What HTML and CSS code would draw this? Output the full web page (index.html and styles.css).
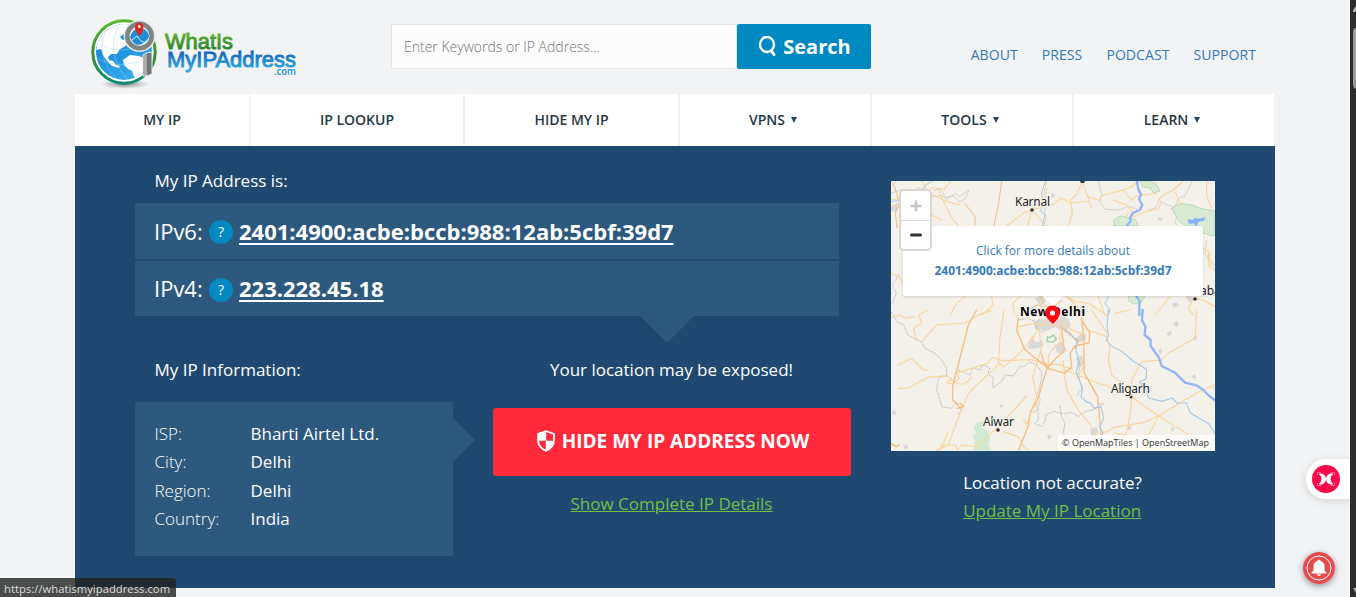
FILE: index.html
```html
<!DOCTYPE html>
<html lang="en">
<head>
<meta charset="utf-8">
<title>What Is My IP Address</title>
<link rel="stylesheet" href="styles.css">
</head>
<body>
<div class="page">
  <header class="header">
    <a class="logo">
      <svg width="210" height="76" viewBox="0 0 210 76">
        <defs>
          <linearGradient id="ring" x1="0" y1="0" x2="0" y2="1"><stop offset="0" stop-color="#5cb531"/><stop offset=".55" stop-color="#35912f"/><stop offset="1" stop-color="#0d8a72"/></linearGradient>
          <linearGradient id="sea" x1="0" y1="0" x2=".5" y2="1"><stop offset="0" stop-color="#0876cf"/><stop offset="1" stop-color="#35a9ea"/></linearGradient>
          <linearGradient id="wg" x1="0" y1="0" x2="0" y2="1"><stop offset=".2" stop-color="#5cb02e"/><stop offset=".8" stop-color="#2c842f"/></linearGradient>
          <linearGradient id="wb" x1="0" y1="0" x2="0" y2="1"><stop offset=".2" stop-color="#1261b8"/><stop offset=".85" stop-color="#29a4e2"/></linearGradient>
          <radialGradient id="sh"><stop offset="0" stop-color="#777"/><stop offset="1" stop-color="#aaa" stop-opacity="0"/></radialGradient>
          <clipPath id="globe"><circle cx="34" cy="36" r="28"/></clipPath>
        </defs>
        <ellipse cx="35" cy="68" rx="25" ry="5" fill="url(#sh)"/>
        <circle cx="34" cy="36" r="31.2" fill="#fff" stroke="url(#ring)" stroke-width="3"/>
        <circle cx="34" cy="36" r="28" fill="url(#sea)"/>
        <g clip-path="url(#globe)">
          <path d="M6 34l2-12 6-8 10-6 9-3 9 1-2 5-4 2-2 5-4 3 3 3 3 0 2 4-4 3-4 2-3 5-6 0-3 3 1 3 4 1 3 4 4 1-1 2-7-2-5-5-4-6-2-6zM38 27l4-3 3 3 5 3-3 3-5-1-5-1zM33 44l7-5 9 1 7 3 6 3-1 8-6 5-5 8-4-1-4-11-4-2-4-4z" fill="#fff"/>
          <path d="M7 42q26 15 56-4M8 28q24 12 50 0M15 15q-9 28 11 47M30 8q-17 27 8 56" fill="none" stroke="#9ed7f8" stroke-width=".6" opacity=".7"/>
        </g>
        <path d="M53 39q4-3 9-3v22q-3 2-9 2z" fill="#73777a" stroke="#eee" stroke-width="1"/>
        <path d="M54 39l3-1v21h-3z" fill="#a9adae"/>
        <circle cx="49.500" cy="20" r="13" fill="#dce8ee" stroke="#e8e8e8" stroke-width="6"/>
        <circle cx="49.500" cy="20" r="12.200" fill="#e5f1f7" stroke="#7e8386" stroke-width="4.500"/>
        <path d="M40 21q3-9 10-9 9 2 9 9-4 7-11 8-5-1-8-8z" fill="#218dd7"/>
        <path d="M42 24l5-4 4 5 5 2" fill="none" stroke="#d3edfa"/>
        <path d="M49.500 20q-4.500-5-4.500-9a4.200 4.200 0 018.400 0q0 4-3.900 9z" fill="#dd261c"/><circle cx="49.300" cy="10.500" r="1.400" fill="#fff"/>
        <g font-family="Liberation Sans, Arial, sans-serif" stroke-width=".9">
          <text x="75" y="33" font-size="22" textLength="68" lengthAdjust="spacingAndGlyphs" fill="url(#wg)" stroke="url(#wg)">WhatIs</text>
          <text x="77" y="50.500" font-size="22" textLength="129" lengthAdjust="spacingAndGlyphs" fill="url(#wb)" stroke="url(#wb)">MyIPAddress</text>
        </g>
        <text x="184" y="59" font-family="Open Sans, sans-serif" font-size="10" font-weight="600" textLength="22" lengthAdjust="spacingAndGlyphs" fill="#1a91d2">.com</text>
      </svg>
    </a>
    <div class="search">
      <div class="search-input">Enter Keywords or IP Address...</div>
      <div class="search-button">
        <svg width="19" height="21" viewBox="0 0 19 21"><ellipse cx="9" cy="8.500" rx="7" ry="7.500" fill="none" stroke="#fff" stroke-width="2.400"/><path d="M13.500 15l2.500 3.500" stroke="#fff" stroke-width="3" stroke-linecap="round"/></svg>
        <span>Search</span>
      </div>
    </div>
    <nav class="top-links"><a>ABOUT</a><a>PRESS</a><a>PODCAST</a><a>SUPPORT</a></nav>
  </header>

  <nav class="menu">
    <a>MY IP</a><a>IP LOOKUP</a><a>HIDE MY IP</a>
    <a class="drop">VPNS<i class="caret"></i></a><a class="drop">TOOLS<i class="caret"></i></a><a class="drop">LEARN<i class="caret"></i></a>
  </nav>

  <main class="panel">
    <section class="details">
      <h2 class="label">My IP Address is:</h2>
      <div class="ip-list">
        <div class="ip-row"><span class="ip-kind">IPv6:</span><span class="help">?</span><a class="ip">2401:4900:acbe:bccb:988:12ab:5cbf:39d7</a></div>
        <div class="ip-row ip-row-last"><span class="ip-kind">IPv4:</span><span class="help">?</span><a class="ip">223.228.45.18</a></div>
      </div>
      <div class="lower">
        <div class="info">
          <h2 class="label">My IP Information:</h2>
          <dl class="info-box">
            <dt>ISP:</dt><dd>Bharti Airtel Ltd.</dd>
            <dt>City:</dt><dd>Delhi</dd>
            <dt>Region:</dt><dd>Delhi</dd>
            <dt>Country:</dt><dd>India</dd>
          </dl>
        </div>
        <div class="action">
          <p class="exposed">Your location may be exposed!</p>
          <a class="hide-button">
            <svg width="18" height="22" viewBox="0 0 18 22"><path d="M9 .3l8.800 3v7.500q0 7.300-8.800 10.900Q.2 18.100.2 10.800V3.300z" fill="#fff"/><path d="M9.200 2.100l6.800 2.300v6.400H9.200zM8.800 10.800v8.900Q2.300 17 2 10.800z" fill="#ff2a3b"/></svg>
            <span>HIDE MY IP ADDRESS NOW</span>
          </a>
          <a class="green">Show Complete IP Details</a>
        </div>
      </div>
    </section>

    <aside class="side">
      <div class="map">
        <svg width="324" height="270" viewBox="0 0 324 270">
          <rect width="324" height="270" fill="#f4f1ea"/>
          <!-- northern half, drawn at three units per pixel -->
          <g transform="translate(-6,-6) scale(.33333)" fill="none" stroke-linejoin="round" stroke-linecap="round">
            <path d="M860 100l25-15 40 5 20 10 45 8v75l-20-3-10-5-35 2-22-22-22-18z" fill="#d9ead2" stroke="#9ad39c" stroke-width="2" stroke-dasharray="5 3"/>
            <path d="M765 18l30 0 20 10 10 20-20 5-10-13-22-5zM686 135l20-12 45 10 10 20h-75zM730 362h50l-10 20-25 5-15-10z" fill="#d9ead2" stroke="#9ad39c" stroke-width="2" stroke-dasharray="5 3"/>
            <path d="M908 132l14 3 8-6 10 2 22-4-5 10-17 3-5 15-10-10-14 2z" fill="#86b3ff"/>
            <g fill="#dad9d8"><path d="M18 95l20-12 8 10-15 18-13-3zM500 55l12 3-4 10-12-2zM820 125l15 5-6 8-12-4zM900 365l20-3 8 12-15 8zM860 385l18-3 3 12-15 4zM955 350l15 2-3 14-14-4zM450 370l20-8 15 15-20 15z"/></g>
            <g stroke="#c8c6c4" stroke-width="2.500" stroke-dasharray="7 4"><path d="M18 55l35-12 25 10 20-15 30 8 15 20 25-5 18 10 25-15 12 8 28-17-10 25-20 8-15-18-25 5-15-25-20 5M640 18l10 40-5 25 18 20 40 2 28-12 25 10 15-12M790 105l20-5 15-22 20 12 25 5 10-25 20-8 22-44M860 100l15 25-5 18 25 25 25 3M990 270l-22-18-8-22 5-35M42 300l-20 30 12 25-12 30M475 153l8-20-5-25 8-15-5-30 5-25"/></g>
            <g stroke="#fbd596" stroke-width="3.200"><path d="M18 75l30-5 45-25 30 8 20-15 35 5 20-25M110 18l20 35 60 27 35 10M20 90l45 5 75 25 30 15M160 45l35 75 25 33M440 105l-12 48M440 105l-25 10-50 38M440 105l65-18 25-18 25 15 55-5M440 105l35-40 10-47M440 105l45 48M592 20l-15 35-20 20 5 40-12 38M592 20l18 50 10 30M610 65l30 10 15-15 60-15 25-10 20-17M715 45l25 30 15-12 60-8M815 80l20-20 30-15 30-27M870 50l20 42M830 80l-10 22-40 8-45 20M965 18v45l15 35M740 110l-15-20-40-15M954 220l18 10 5 45 13 10M970 235v40M18 295l25 10 10 20M240 365l-25 20-20 35M320 365l5 25-35 30M405 365l-22 20 5 35M545 365l30 15 35 5 55 35M640 365l20 55M855 365l-20 25-25 30M925 370l-15 30 15 20M925 370l30 5 35 20M720 130l10-15 20-4"/></g>
            <g stroke="#f9bd7d" stroke-width="3"><path d="M350 18l-8 60-15 75M240 85l30 40 0 28M18 18l12 20 14 50-13 25 5 45M475 395l-18-5-25 15M550 370l28 25 15 25M465 365l10 20 12 10 25-5 20-15"/></g>
            <g stroke="#a8ccea" stroke-width="3"><path d="M20 80l25-5 25 12 25-10 28-48 20-11M482 18l-12 35 4 35-8 20 14 12-8 33M670 365l-10 20 15 20-5 15"/></g>
            <path d="M756 18l4 25 8 15-6 14 10 18-7 15-20 8-10 15 2 10-10 12M755 365l8 12 0 43" stroke="#91b4fa" stroke-width="7"/>
          </g>
          <!-- southern half -->
          <g transform="translate(-6,129) scale(.33333)" fill="none" stroke-linejoin="round" stroke-linecap="round">
            <path d="M265 421l5-30-8-12 12-10-8-15 8-15 20-5-4 20 20 8 5 30-5 10 8 19z" fill="#d0ead0"/>
            <path d="M488 80l8 2 10-7 8 13-10 8-18-1z" stroke="#9ad39c" stroke-width="4"/>
            <g fill="#dad9d8"><path d="M445 35l20-10 10 5 15-8 30 5 15-14 15 15 8 20-10 5-5 15-12-12-8 5-12-10-22 10-12 5-10-10-15 5zM430 95l15-7 8 10 18-8 5 18-18 7-28 2zM580 78l15-10 10 10-5 15-18 3-12-8zM510 105l20-10 15 25-10 12-20-5zM865 40l12-8 5 15-10 5zM845 68l12-7 5 12-12 6zM820 120l10-5 2 14-8 4zM920 198l12-5 2 10-8 5zM925 80l12-3-2 12-8 3zM575 140l15-3 8 20-10 15-12-5zM615 360l15-10 10 10-5 22-15 5zM730 345l10 3-3 12-12-1zM860 350l10 5-5 10-8-4zM485 380l10-7 5 7-8 9zM345 285l10-3-2 10-8 1zM22 300l12 5-3 10-9-2zM55 408l10-7 5 13-10 4z"/></g>
            <g stroke="#c8c6c4" stroke-width="3" stroke-dasharray="7 4"><path d="M18 5l18 30 20 10 12 30 40 20 12 20 30 15 20 20 15 25 0 20-25 10-5 35 10 30 5 20 28 5 18-18 12 25-8 10M220 180l35 15 10-20 22 5 5-15 22 8-5 20 15 8 0 32 25-18 12-20 25 3 18-30 10 3 20-15 22 10 14 20-2 30-10 35 8 18-8 25 2 35-10 12 20 8 12-20 0-15 25-10 30 8 20-5 25 12 20-15 25-5 15-15 14-2M450 280l10 18-18 10M525 288l5 35 10 15-5 30 12 30-2 23M400 30l30-5 20 10 5 20 20 15M575 145l10 20-5 30 10 40-12 20"/></g>
            <g stroke="#fad69c" stroke-width="3.500"><path d="M18 23l25-8 20 10 25-5M95 90l-10-35 25-15-8-25 25-15M110 95l45-50 85-6 45-26 35-12M40 165l40-20 35 35 15 0M40 236l30-2 60-32 55-5 15 10-15 12 20 3 18-18-10-14 95-30 15-18 30 10 85-3 55 15 30 0 40 15M340 160l5-75 12-85M340 160l18 10 40-35 50-55M200 210l20 12 20 0 20-20M235 287l15-35 15-17 80-75M190 365l-15 35-10 21M235 285l-20 50-25 70-35 16M165 405l45 0 8 15 12-15 45 5 65-60 85-92M355 365l45 15 15 30 15 10M415 325l10 20 30-85-12-60 25-80-5-65M490 170l0-35 20-25 15-10 0-30M400 50l50-10 75 8M435 90l60-75M490 5l70 55 40 15M610 60l55 20 10 30-5 40 10 45 25 20 15 20M620 0l50 75M595 170l-20 35M535 150l5 60 8 35 35 60 30 35 10 20M540 180l100 40 65 20 35 20M740 260l0-50 30-55 60-5M740 260l80 58 75-45 50-30 45-18M740 260l-2 30-8 55-20 71M820 318l-45 20-90 15-20 12-35 8M820 318l90 55 50 30M820 318l-30 60-10 43M690 370l35 5 20 46M830 150l20-20 80-45 5-85M690 10l45-10"/></g>
            <g stroke="#f9bc80" stroke-width="4"><path d="M275 0l-25 45-20 80-20 75-7 30 0 40 15 15M400 25l-5 35 22 55 28 25 45 35 50 15 20-20-5-40 15-22 42-10 2-30-25-40M588 0l8 85 2 105 40 70 15 165M530 60l8 60-30 30-22 25-30 100-20 30-5 40-30 75M18 400l15 10 10-5M225 280l10 10-20 5M470 130l5 25 12 15M525 50l35 28 20 15-10 22"/></g>
            <g stroke="#a8cbe7" stroke-width="3.500"><path d="M670 0l-4 50 4 25-6 15 15 18 30 15 35 30 40 25 0 28-20 10 15 15 12 33 40 10 30-10 15 15 28 0 12 30 55 32 20 30-2 20M540 55l20 20 15 20-2 25 10 35-10 30 20 50-5 25 15 15 15 5 10 15 20-5 8 35-12 25 10 20-10 20 10 16"/></g>
            <path d="M773 0l-2 30 10 20-2 25 18 15 0 18 25 35 8 25 40 20 30 30 35 8 20 14 18 18 20 15" stroke="#91b4fa" stroke-width="7"/>
          </g>
          <g fill="#333"><path d="M189 0h5l-1 2h-3z"/><circle cx="141" cy="29" r="1.800"/><circle cx="304" cy="118" r="1.800"/><circle cx="240" cy="216" r="1.500"/><circle cx="107" cy="249" r="1.800"/></g>
          <g class="places">
            <text x="124" y="25" textLength="35">Karnal</text>
            <text x="309" y="114">aba</text>
            <text x="220" y="212" textLength="39">Aligarh</text>
            <text x="92" y="245" textLength="31">Alwar</text>
            <text x="129" y="135" textLength="65" class="capital">New Delhi</text>
          </g>
          <path d="M162 143q-8-7-8-11a7.500 7.500 0 0115 0q0 4-7 11z" fill="#ff0610"/><circle cx="161.500" cy="132" r="2.600" fill="#fff"/>
          <path d="M152 115h20l-10 10z" fill="#fff"/>
        </svg>
        <div class="popup"><a>Click for more details about</a><b>2401:4900:acbe:bccb:988:12ab:5cbf:39d7</b></div>
        <div class="zoom"><span class="plus"><svg width="12" height="12"><path d="M6 1.500v9M1.500 6h9" stroke="#c6c6c6" stroke-width="2.500" stroke-linecap="round"/></svg></span><span><svg width="12" height="12"><path d="M1.500 6h9" stroke="#333" stroke-width="3" stroke-linecap="round"/></svg></span></div>
        <div class="credits">© OpenMapTiles | OpenStreetMap</div>
      </div>
      <div class="accuracy"><span>Location not accurate?</span><a class="green">Update My IP Location</a></div>
    </aside>
  </main>
</div>

<div class="scrollbar"><svg width="6" height="597"><path d="M3 12v-2l3-4v6z" fill="#aaa"/><path d="M6 28q-3 0-3 4v52q0 4 3 5z" fill="#9b9b9b"/><path d="M3 588h3v5z" fill="#aaa"/></svg></div>
<div class="side-tab"><svg width="28" height="28" viewBox="0 0 28 28"><circle cx="14" cy="14" r="14" fill="#ff0748"/><path d="M7.500 9H10q3.500 1 3.500 5T10 19H7.500Q10 17 10 14T7.500 9zM20.500 9H18q-3.500 1-3.500 5t3.500 5h2.500Q18 17 18 14t2.500-5z" fill="#fff" stroke="#fff"/><path d="M5.500 10V7.500H9M5.500 18v2.500H9M22.500 10V7.500H19M22.500 18v2.500H19" fill="none" stroke="#ff8fae" stroke-width=".8"/></svg></div>
<div class="bell"><svg width="32" height="32" viewBox="0 0 32 32"><circle cx="16" cy="16" r="16" fill="#e54b4d"/><circle cx="16" cy="16" r="12" fill="none" stroke="#fff" stroke-width="1"/><path d="M8.500 21.500v-1l2-2V14q0-4 4-5 0-1.500 1.500-1.500T17.500 9q4 1 4 5v4.500l2 2v1zM14 22.300h4q0 2-2 2t-2-2z" fill="#fff"/></svg></div>
<div class="status">https://whatismyipaddress.com</div>
</body>
</html>
```

FILE: styles.css
```css
* { box-sizing: border-box; }
body { margin: 0; height: 597px; overflow: hidden; background: #f1f3f5; font-family: "Open Sans", "Noto Sans", sans-serif; color: #fff; }
h2, p, dl, dd { margin: 0; }
.page { width: 1200px; margin-left: 75px; }

.header { height: 94px; display: flex; align-items: flex-start; }
.logo { width: 316px; padding: 16px 0 0 15px; }
.logo svg { display: block; }
.search { width: 480px; height: 45px; margin-top: 24px; display: flex; }
.search-input { width: 346px; border: 1px solid #e3e5e7; background: #fcfcfc; color: #757575; font-size: 14px; font-weight: 300; line-height: 44px; padding-left: 12px; }
.search-button { width: 134px; background: #0088c1; border-radius: 2px; display: flex; align-items: center; justify-content: center; gap: 6px; font-size: 20px; line-height: 44px; font-weight: 700; padding-left: 1px; }
.top-links { margin-left: auto; padding: 45px 19px 0 0; display: flex; gap: 24px; font-size: 14px; font-weight: 450; line-height: 20px; letter-spacing: .08px; color: #337ab7; }

.menu { height: 52px; display: grid; grid-template-columns: 174px 212px 213px 190px 200px 200px; gap: 2px; font-size: 14px; font-weight: 650; color: #273845; }
.menu a { background: #fff; display: flex; align-items: center; justify-content: center; padding-bottom: 1px; }
.menu .drop { padding-right: 4px; }
.caret { border: 3px solid transparent; border-top: 6px solid #204971; border-bottom: 0; margin-left: 6px; }

.panel { height: 442px; background: #204971; padding: 0 60px; display: flex; gap: 52px; }
.details { width: 704px; }
.label { font-size: 17px; font-weight: 400; line-height: 24px; padding-left: 19.5px; }
.details > .label { padding-top: 23px; height: 57px; }
.ip-list { display: grid; grid-template-rows: 56px 55px; gap: 2px; }
.ip-row { background: #2d597f; padding-left: 19px; display: flex; align-items: center; font-size: 22px; position: relative; }
.ip-kind { width: 55px; font-size: 22px; font-weight: 370; padding-bottom: 1px; }
.help { width: 24px; height: 24px; margin: 2px 6px 0 0; border-radius: 50%; background: #0088c1; font-size: 14px; line-height: 24px; text-align: center; }
.ip { font-weight: 700; font-size: 22px; line-height: 25px; text-decoration: underline; text-decoration-thickness: 2px; text-underline-offset: 3px; text-decoration-skip-ink: none; }
.ip-row-last::after { content: ""; position: absolute; top: 55px; left: 505px; border: 27px solid transparent; border-top-color: #2d597f; border-bottom: 0; }
.lower { display: flex; gap: 40px; padding-top: 42px; }
.info { width: 318px; flex: none; }
.info-box { margin-top: 20px; height: 154px; background: #2d597f; padding: 18px 19.5px; display: grid; grid-template-columns: 96px 1fr; grid-auto-rows: 28.4px; font-size: 17px; line-height: 28px; position: relative; }
.info-box::after { content: ""; position: absolute; left: 318px; top: 16px; border: 22px solid transparent; border-left-color: #2d597f; border-right: 0; }
.info-box dt { font-weight: 320; }
.action { width: 358px; flex: none; display: flex; flex-direction: column; align-items: center; font-size: 17px; line-height: 24px; }
.exposed, .action .green { padding-right: 1px; }
.hide-button { width: 358px; height: 68px; margin: 26px 0 16px; background: #ff2a3b; border-radius: 3px; display: flex; align-items: center; justify-content: center; gap: 7px; padding: 0 0 2px 2px; font-size: 19px; font-weight: 700; }
.green { color: #72bf44; text-decoration: underline; }

.side { width: 324px; padding-top: 35px; }
.map { position: relative; height: 270px; overflow: hidden; }
.map > svg { display: block; }
.places { font: 12px "Noto Sans", sans-serif; fill: #222; stroke: #f6f3ed; stroke-width: 2px; paint-order: stroke; }
.capital { font-weight: 700; fill: #000; }
.popup { position: absolute; left: 12px; top: 45px; width: 300px; height: 70px; background: #fff; border-radius: 2px; display: flex; flex-direction: column; align-items: center; padding-top: 15px; font-size: 12px; line-height: 20px; color: #337ab7; box-shadow: 0 1px 3px #0002; }
.zoom { position: absolute; left: 8px; top: 8px; width: 33px; height: 62px; border: 2px solid #d8d7d5; border-radius: 5px; background: #fff; display: grid; grid-template-rows: 30px 28px; }
.zoom span { display: grid; place-items: center; }
.zoom .plus { border-bottom: 1px solid #ddd; }
.credits { position: absolute; right: 0; bottom: 0; width: 157px; height: 16px; padding-right: 2px; background: #fffb; color: #333; font-size: 9px; line-height: 16px; text-align: center; white-space: nowrap; }
.accuracy { display: grid; justify-content: center; padding: 18px 1px 0 0; font-size: 17px; line-height: 28px; }

.scrollbar { position: absolute; right: 0; top: 0; width: 6px; height: 597px; background: #2c2c2c; }
.side-tab { position: absolute; left: 1306px; top: 459px; width: 44px; height: 40px; padding: 6px; border-radius: 20px 0 0 20px; background: #fff; box-shadow: 0 2px 10px #0002; clip-path: inset(-20px 0 -20px -20px); }
.side-tab svg, .bell svg { display: block; }
.bell { position: absolute; left: 1303px; top: 552px; border-radius: 50%; box-shadow: 0 2px 6px #0006; }
.status { position: absolute; left: 0; bottom: 0; width: 176px; height: 19px; padding-left: 4px; background: rgba(34, 34, 34, .8); border-radius: 0 3px 0 0; color: #ddd; font-size: 11.3px; line-height: 21px; white-space: nowrap; }
```
